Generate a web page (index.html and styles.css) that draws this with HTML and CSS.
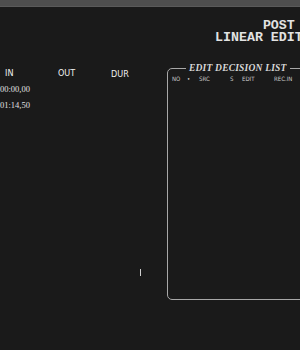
FILE: index.html
```html
<!DOCTYPE html>
<html>
<head>
<meta charset="utf-8">
<link rel="stylesheet" href="styles.css">
</head>
<body>
<div class="topbar"></div>
<header class="header">
<pre class="title">      POST
LINEAR EDITOR</pre>
</header>
<main class="main">
  <section class="times">
    <div class="grid">
      <div class="th th-in">IN</div>
      <div class="th th-out">OUT</div>
      <div class="th th-dur">DUR</div>
      <div class="td">00:00,00</div>
      <div class="td"></div>
      <div class="td"></div>
      <div class="td">01:14,50</div>
      <div class="td"></div>
      <div class="td"></div>
    </div>
    <div class="cursor-row"><span class="cursor"></span></div>
  </section>
  <fieldset class="edl">
    <legend class="edl-title">EDIT DECISION LIST</legend>
    <div class="edl-head">
      <span class="c-no">NO</span>
      <span class="c-dot">•</span>
      <span class="c-src">SRC</span>
      <span class="c-s">S</span>
      <span class="c-edit">EDIT</span>
      <span class="c-rec">REC.IN</span>
    </div>
  </fieldset>
</main>
</body>
</html>
```

FILE: styles.css
```css
html, body {
  margin: 0;
  padding: 0;
}
body {
  width: 300px;
  height: 350px;
  overflow: hidden;
  background: #1a1a1a;
  color: #ddd;
  font-family: "Liberation Sans", sans-serif;
}
.topbar {
  height: 6px;
  background: #4e4e4e;
  border-bottom: 1px solid #5a5a5a;
}
.header {
  height: 56px;
  position: relative;
}
.title {
  margin: 0;
  padding: 13px 0 0 215px;
  font-family: "Liberation Mono", monospace;
  font-weight: bold;
  font-size: 13.3px;
  line-height: 12px;
  color: #e2e2e2;
  white-space: pre;
}
.main {
  display: flex;
  align-items: flex-start;
}
.times {
  width: 167px;
  flex-shrink: 0;
  display: flex;
  flex-direction: column;
}
.grid {
  display: grid;
  grid-template-columns: 53px 53px 53px;
  grid-auto-rows: 16px;
  padding-top: 4px;
}
.th {
  padding-left: 5px;
  font-family: "DejaVu Sans Condensed", "DejaVu Sans", sans-serif;
  font-stretch: condensed;
  font-size: 9px;
  line-height: 12px;
  color: #f0f0f0;
}
.th-dur {
  padding-top: 1px;
}
.td {
  font-family: "Liberation Serif", serif;
  font-size: 8.5px;
  line-height: 10px;
  color: #e0e0e0;
  padding-top: 1px;
}
.cursor-row {
  padding-top: 154px;
  padding-left: 140px;
}
.cursor {
  display: block;
  width: 1px;
  height: 7px;
  background: #cfcfcf;
}
.edl {
  margin: 0;
  padding: 0;
  width: 150px;
  height: 235px;
  flex-shrink: 0;
  border: 1px solid #a8a8a8;
  border-radius: 5px;
  min-width: 0;
}
.edl-title {
  margin-left: 18px;
  padding: 0 3px;
  font-family: "Liberation Serif", serif;
  font-weight: bold;
  font-style: italic;
  font-size: 9.5px;
  line-height: 10px;
  letter-spacing: 0.2px;
  color: #d8d8d8;
}
.edl-head {
  display: flex;
  padding: 2px 0 0 4px;
  font-family: "DejaVu Sans Condensed", "DejaVu Sans", sans-serif;
  font-size: 6px;
  line-height: 8px;
  color: #cccccc;
}
.c-no { width: 15px; }
.c-dot { width: 12px; }
.c-src { width: 31px; }
.c-s { width: 12px; }
.c-edit { width: 32px; }
.c-rec { width: 20px; }
```
